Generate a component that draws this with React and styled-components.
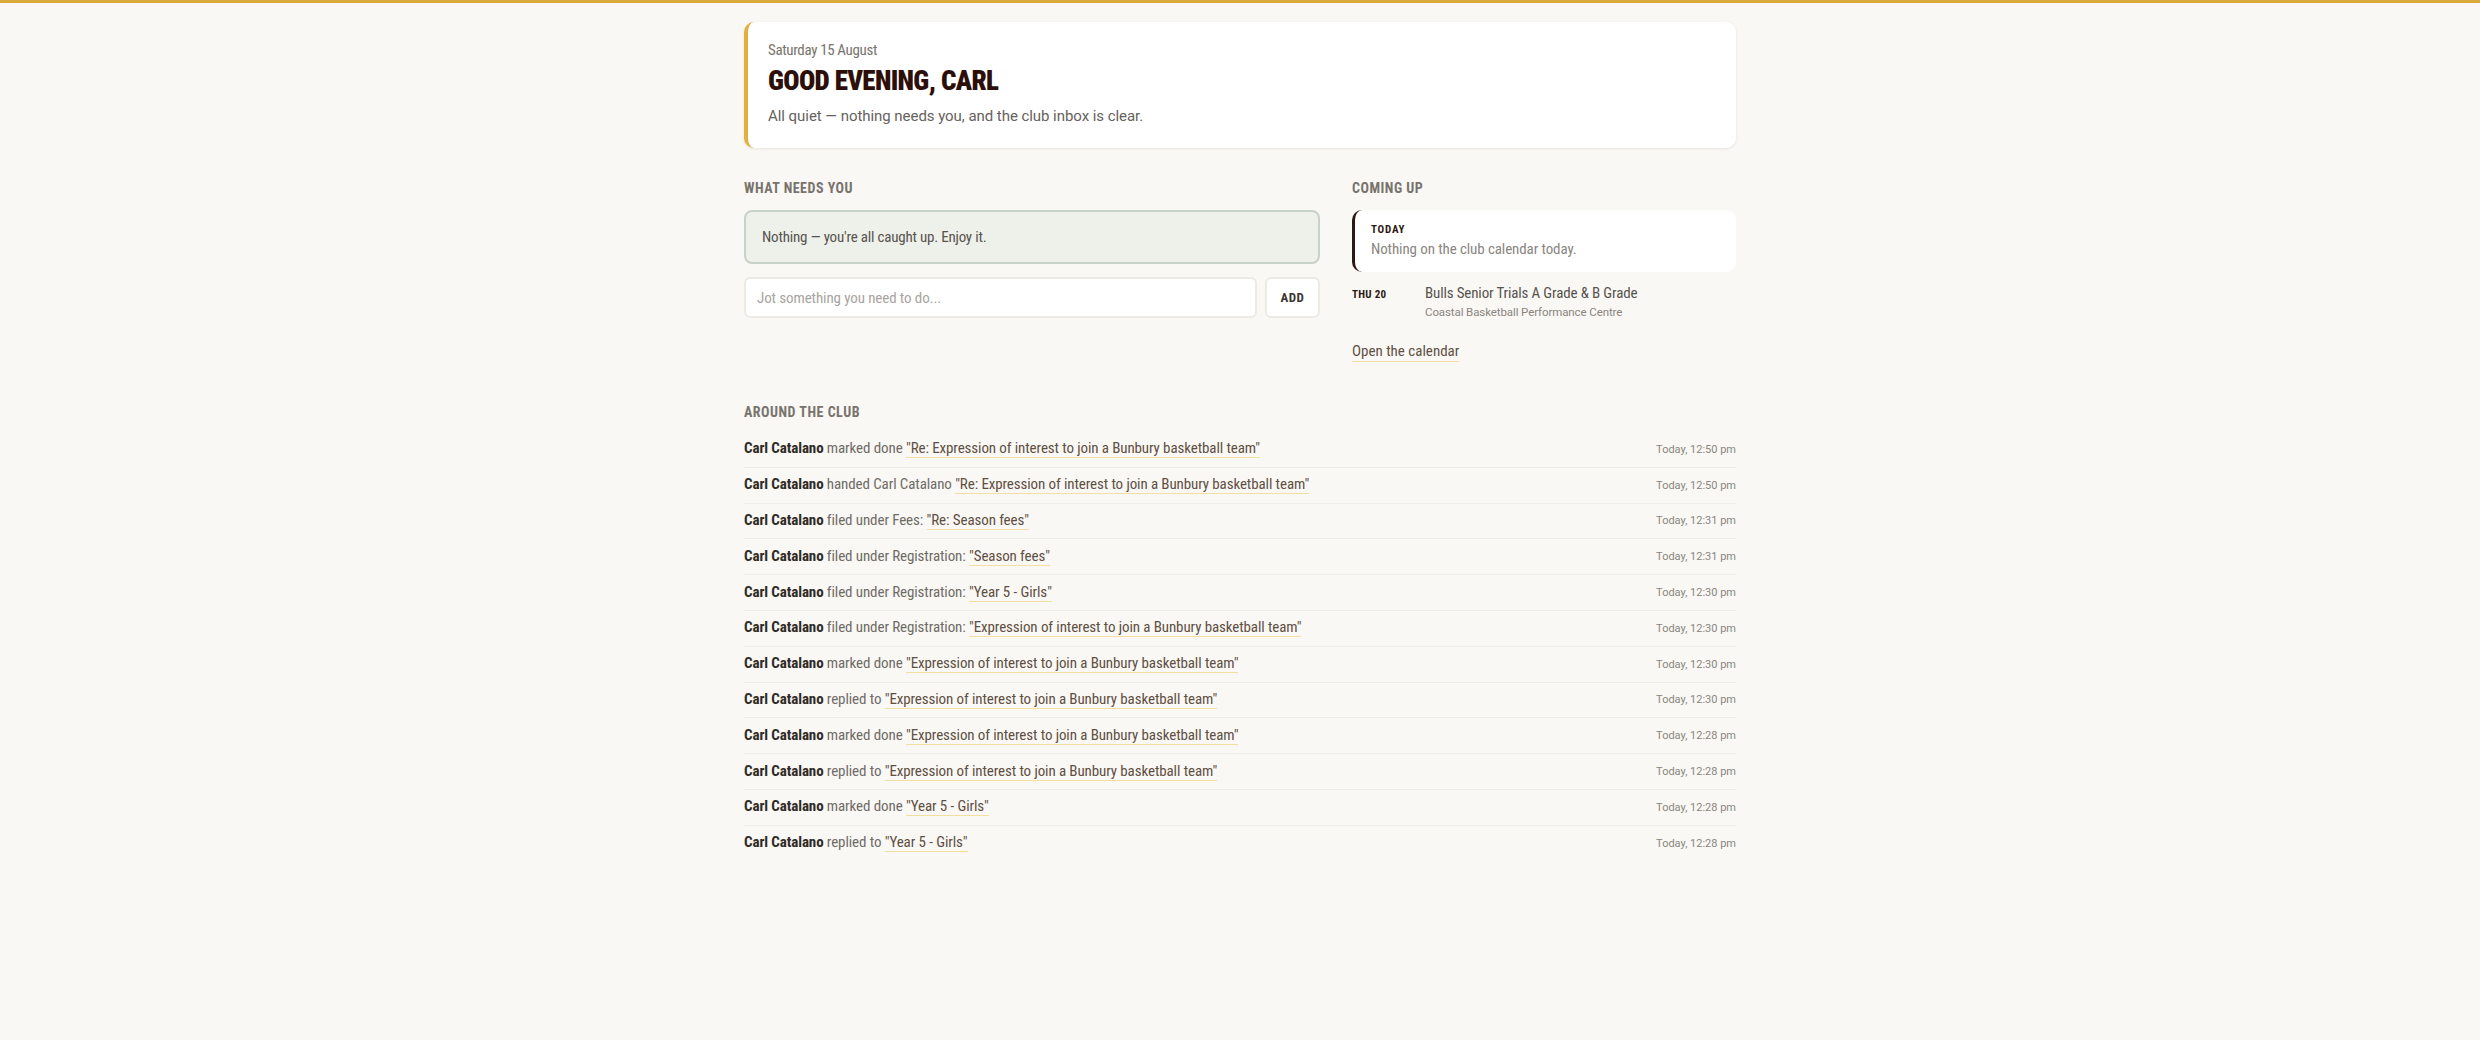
import React from "react";
import styled, { createGlobalStyle } from "styled-components";

const Global = createGlobalStyle`
  html, body { margin: 0; padding: 0; background: #f9f8f5; }
  body { font-family: "Roboto", "Liberation Sans", sans-serif; font-stretch: 75%; color: #57534e; }
`;
const Page = styled.div`
  min-height: 1040px;
  box-sizing: border-box;
  border-top: 3px solid #dcaa3c;
  background: #f9f8f5;
`;
const Main = styled.main`
  width: 992px;
  margin: 0 auto;
  padding-top: 19px;
`;
const Hero = styled.section`
  box-sizing: border-box;
  height: 126px;
  padding: 18px 20px;
  background: #fff;
  border-left: 4px solid #e0b040;
  border-radius: 10px;
  box-shadow: 0 1px 3px rgba(60, 50, 30, 0.1);
`;
const HeroDate = styled.div`
  font-size: 15px;
  letter-spacing: -0.35px;
  line-height: 20px;
  color: #78736c;
`;
const HeroTitle = styled.h1`
  margin: 4px 0 7px;
  font-weight: 900;
  font-size: 27px;
  letter-spacing: -0.65px;
  line-height: 34px;
  color: #2c0f08;
  text-transform: uppercase;
`;
const HeroSub = styled.p`
  margin: 0;
  font-size: 15px;
  font-stretch: 100%;
  letter-spacing: -0.05px;
  line-height: 22px;
  color: #66625c;
`;
const Columns = styled.div`
  display: grid;
  grid-template-columns: 576px 384px;
  column-gap: 32px;
  margin-top: 30px;
`;
const Heading = styled.h2`
  margin: 0 0 12px;
  font-weight: 700;
  font-size: 14px;
  line-height: 20px;
  letter-spacing: 0.5px;
  color: #78736c;
  text-transform: uppercase;
`;
const EmptyNote = styled.div`
  box-sizing: border-box;
  height: 54px;
  display: flex;
  align-items: center;
  padding: 0 16px;
  font-size: 15px;
  letter-spacing: -0.2px;
  color: #57534e;
  background: #eef0ea;
  border: 2px solid #c8d2c8;
  border-radius: 8px;
`;
const JotRow = styled.form`
  display: flex;
  gap: 8px;
  margin-top: 13px;
`;
const JotInput = styled.input`
  flex: 1;
  box-sizing: border-box;
  height: 41px;
  padding: 0 11px;
  font: inherit;
  font-size: 15px;
  letter-spacing: -0.1px;
  background: #fff;
  border: 2px solid #eceae5;
  border-radius: 6px;
  &::placeholder { color: #a8a49e; opacity: 1; }
`;
const AddButton = styled.button`
  box-sizing: border-box;
  width: 55px;
  height: 41px;
  padding: 0;
  font: inherit;
  font-weight: 700;
  font-size: 13px;
  letter-spacing: 0.5px;
  color: #3a3632;
  background: #fff;
  border: 2px solid #eceae5;
  border-radius: 6px;
`;
const TodayCard = styled.div`
  box-sizing: border-box;
  height: 62px;
  padding: 12px 16px;
  background: #fff;
  border-left: 3px solid #2c1a12;
  border-radius: 10px;
`;
const TodayLabel = styled.div`
  font-weight: 700;
  font-size: 11px;
  line-height: 15px;
  letter-spacing: 0.8px;
  margin-bottom: 2px;
  color: #2c1a12;
`;
const TodayNote = styled.div`
  font-size: 15px;
  letter-spacing: -0.1px;
  line-height: 20px;
  color: #8a867f;
`;
const EventRow = styled.div`
  display: flex;
  margin-top: 11px;
`;
const EventDate = styled.div`
  width: 73px;
  padding-top: 4px;
  font-weight: 700;
  font-size: 11px;
  line-height: 15px;
  letter-spacing: 0.3px;
  color: #2c1a12;
`;
const EventName = styled.div`
  font-size: 15px;
  letter-spacing: -0.15px;
  line-height: 20px;
  color: #57534e;
`;
const EventPlace = styled.div`
  margin-top: 1px;
  font-size: 11.5px;
  font-stretch: 100%;
  letter-spacing: -0.1px;
  line-height: 16px;
  color: #8a867f;
`;
const Link = styled.a`
  color: #5f4f42;
  text-decoration: none;
  border-bottom: 1px solid #f3e0a0;
`;
const CalendarLink = styled(Link)`
  display: inline-block;
  margin-top: 22px;
  font-size: 15px;
  line-height: 19px;
`;
const Around = styled.section`
  margin-top: 40px;
`;
const AroundHeading = styled(Heading)`
  margin-bottom: 10px;
`;
const Row = styled.div`
  display: flex;
  justify-content: space-between;
  align-items: center;
  height: 35.8px;
  box-sizing: border-box;
  padding-bottom: 2px;
  border-bottom: 1px solid ${p => (p.$last ? "transparent" : "#eeece8")};
  font-size: 15px;
  letter-spacing: -0.1px;
`;
const Actor = styled.strong`
  font-weight: 700;
  color: #2f2b27;
`;
const Action = styled.span`
  color: #6f6b65;
`;
const When = styled.span`
  margin-top: 2px;
  font-size: 11px;
  font-stretch: 100%;
  letter-spacing: 0;
  color: #8a867f;
`;

const rows = [
  ["marked done", "Re: Expression of interest to join a Bunbury basketball team", "Today, 12:50 pm"],
  ["handed Carl Catalano", "Re: Expression of interest to join a Bunbury basketball team", "Today, 12:50 pm"],
  ["filed under Fees:", "Re: Season fees", "Today, 12:31 pm"],
  ["filed under Registration:", "Season fees", "Today, 12:31 pm"],
  ["filed under Registration:", "Year 5 - Girls", "Today, 12:30 pm"],
  ["filed under Registration:", "Expression of interest to join a Bunbury basketball team", "Today, 12:30 pm"],
  ["marked done", "Expression of interest to join a Bunbury basketball team", "Today, 12:30 pm"],
  ["replied to", "Expression of interest to join a Bunbury basketball team", "Today, 12:30 pm"],
  ["marked done", "Expression of interest to join a Bunbury basketball team", "Today, 12:28 pm"],
  ["replied to", "Expression of interest to join a Bunbury basketball team", "Today, 12:28 pm"],
  ["marked done", "Year 5 - Girls", "Today, 12:28 pm"],
  ["replied to", "Year 5 - Girls", "Today, 12:28 pm"],
];

export default function App() {
  return (
    <Page>
      <Global />
      <Main>
        <Hero>
          <HeroDate>Saturday 15 August</HeroDate>
          <HeroTitle>Good evening, Carl</HeroTitle>
          <HeroSub>All quiet — nothing needs you, and the club inbox is clear.</HeroSub>
        </Hero>
        <Columns>
          <div>
            <Heading>What needs you</Heading>
            <EmptyNote>Nothing — you're all caught up. Enjoy it.</EmptyNote>
            <JotRow>
              <JotInput placeholder="Jot something you need to do..." />
              <AddButton type="button">ADD</AddButton>
            </JotRow>
          </div>
          <div>
            <Heading>Coming up</Heading>
            <TodayCard>
              <TodayLabel>TODAY</TodayLabel>
              <TodayNote>Nothing on the club calendar today.</TodayNote>
            </TodayCard>
            <EventRow>
              <EventDate>THU 20</EventDate>
              <div>
                <EventName>Bulls Senior Trials A Grade &amp; B Grade</EventName>
                <EventPlace>Coastal Basketball Performance Centre</EventPlace>
              </div>
            </EventRow>
            <CalendarLink href="#">Open the calendar</CalendarLink>
          </div>
        </Columns>
        <Around>
          <AroundHeading>Around the club</AroundHeading>
          {rows.map(([action, subject, when], i) => (
            <Row key={i} $last={i === rows.length - 1}>
              <span>
                <Actor>Carl Catalano</Actor> <Action>{action}</Action>{" "}
                <Link href="#">"{subject}"</Link>
              </span>
              <When>{when}</When>
            </Row>
          ))}
        </Around>
      </Main>
    </Page>
  );
}
